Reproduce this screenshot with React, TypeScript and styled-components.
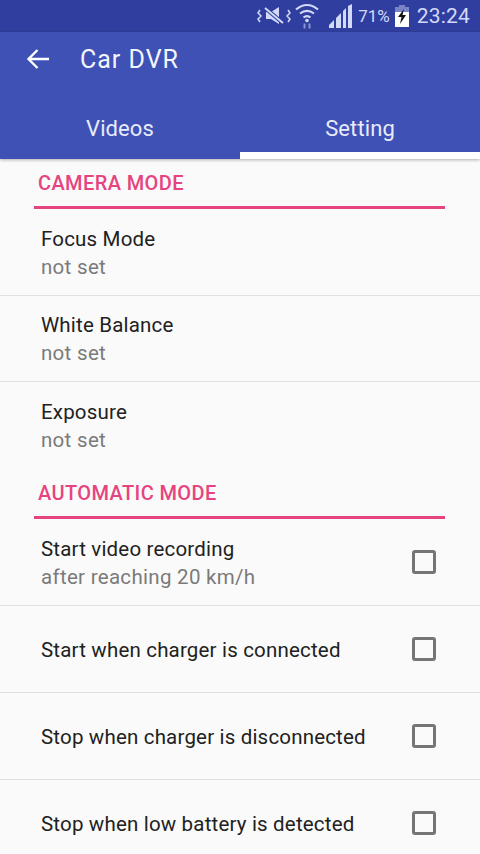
import React from 'react';
import styled, { createGlobalStyle } from 'styled-components';

const GlobalStyle = createGlobalStyle`
  html, body {
    margin: 0;
    padding: 0;
    background: #fafafa;
    font-family: Roboto, "Noto Sans", sans-serif;
  }
`;

const Screen = styled.div`
  width: 480px;
  height: 854px;
  overflow: hidden;
  display: flex;
  flex-direction: column;
  background: #fafafa;
`;

const StatusBar = styled.div`
  height: 32px;
  flex: none;
  background: #303f9f;
  color: #d3daf8;
  display: flex;
  align-items: center;
  justify-content: flex-end;
  padding-right: 10px;
`;

const Percent = styled.span`
  font-size: 17px;
  margin: 0 5px 0 6px;
`;

const Clock = styled.span`
  font-size: 21px;
  letter-spacing: 0.2px;
  margin-left: 8px;
`;

const StatusIcon = styled.svg<{ $gap?: number }>`
  display: block;
  flex: none;
  margin-left: ${({ $gap }) => $gap ?? 0}px;
`;

const AppBar = styled.header`
  flex: none;
  height: 127px;
  background: #3f51b5;
  color: #fff;
  display: flex;
  flex-direction: column;
  box-shadow: 0 1px 3px rgba(0, 0, 0, 0.3);
`;

const TitleRow = styled.div`
  height: 54px;
  display: flex;
  align-items: center;
  padding-left: 26px;
  gap: 30px;
`;

const Title = styled.h1`
  margin: 0;
  font-size: 25px;
  font-weight: 400;
  letter-spacing: 1px;
  color: #f3f5fd;
`;

const Tabs = styled.div`
  margin-top: auto;
  display: grid;
  grid-template-columns: 1fr 1fr;
`;

const Tab = styled.div<{ $active?: boolean }>`
  height: 73px;
  box-sizing: border-box;
  display: flex;
  align-items: center;
  justify-content: center;
  padding-top: 19px;
  font-size: 22px;
  letter-spacing: 0.1px;
  color: #e8ebfa;
  border-bottom: 7px solid ${({ $active }) => ($active ? '#fff' : 'transparent')};
`;

const Content = styled.main`
  flex: 1;
  display: flex;
  flex-direction: column;
`;

const SectionHeader = styled.div`
  margin: 0 35px 0 34px;
  height: 50px;
  flex: none;
  box-sizing: border-box;
  border-bottom: 3px solid #e6447f;
  padding: 11px 0 0 4px;
  color: #e6447f;
  font-size: 20px;
  font-weight: 500;
  letter-spacing: 0.4px;
  line-height: 26px;
`;

const Row = styled.div<{ $compact?: boolean; $last?: boolean }>`
  height: ${({ $compact }) => ($compact ? '86.67px' : '87px')};
  flex: none;
  box-sizing: border-box;
  border-bottom: 1px solid ${({ $last }) => ($last ? 'transparent' : '#e0e0e0')};
  display: flex;
  align-items: center;
  justify-content: space-between;
  padding: 0 44px 0 41px;
`;

const RowText = styled.div`
  display: flex;
  flex-direction: column;
  gap: 3px;
  padding-top: 2px;
`;

const RowTitle = styled.div`
  font-size: 20.5px;
  line-height: 26px;
  letter-spacing: 0.18px;
  color: #212121;
`;

const RowSubtitle = styled.div`
  font-size: 20.5px;
  line-height: 25px;
  letter-spacing: 0.3px;
  color: #7a7a7a;
`;

const Checkbox = styled.div`
  width: 24px;
  height: 24px;
  box-sizing: border-box;
  border: 3px solid #757575;
  border-radius: 3px;
`;

const cameraRows = ['Focus Mode', 'White Balance', 'Exposure'];

const autoRows = [
  { title: 'Start video recording', subtitle: 'after reaching 20 km/h' },
  { title: 'Start when charger is connected' },
  { title: 'Stop when charger is disconnected' },
  { title: 'Stop when low battery is detected' },
];

export default function App(): JSX.Element {
  return (
    <Screen>
      <GlobalStyle />
      <StatusBar>
        <StatusIcon width="34" height="20" viewBox="0 0 34 20" fill="none" stroke="currentColor" strokeWidth="1.500">
          <path d="M9 6h5l8-5v17l-8-5H9z" fill="currentColor" stroke="none" />
          <path d="M7 1l20 17" stroke="#303f9f" strokeWidth="4" />
          <path d="M8 2l18 15" strokeWidth="2" />
          <path d="M3 4L1 7l3 3-3 3 2 3M31 4l2 3-3 3 3 3-2 3" />
        </StatusIcon>
        <StatusIcon $gap={4} width="24" height="26" viewBox="0 0 24 26" fill="none" stroke="currentColor" strokeWidth="2.200">
          <path d="M1 6.500c7-6 15-6 22 0M5 10.500c4.500-3.500 9.500-3.500 14 0M8.500 14.500c2.500-2 4.500-2 7 0" />
          <circle cx="12" cy="17.500" r="1.800" fill="currentColor" stroke="none" />
          <path d="M9.500 20.500v5M14.500 20.500v5" strokeWidth="2" opacity="0.55" />
        </StatusIcon>
        <StatusIcon $gap={10} width="23" height="24" viewBox="0 0 23 24" fill="currentColor">
          <path d="M0 24v-3l5-5v8zM7 24V14l5-5v15zM14 24V7l3-3v20zM19 24V2l4-2v24z" />
        </StatusIcon>
        <Percent>71%</Percent>
        <StatusIcon width="14" height="22" viewBox="0 0 14 22" fill="currentColor">
          <path d="M4 0h6v2h4v6H0V2h4z" opacity="0.45" />
          <path d="M0 7h14v15H0z" fill="#fff" />
          <path d="M9 4L3 12h3.500L5 19l6-9H7.500z" fill="#111" />
        </StatusIcon>
        <Clock>23:24</Clock>
      </StatusBar>
      <AppBar>
        <TitleRow>
          <svg width="24" height="24" viewBox="0 0 24 24" fill="none" stroke="#fff" strokeWidth="2.400">
            <path d="M23 12H2M11.500 3L2.500 12l9 9" />
          </svg>
          <Title>Car DVR</Title>
        </TitleRow>
        <Tabs>
          <Tab>Videos</Tab>
          <Tab $active>Setting</Tab>
        </Tabs>
      </AppBar>
      <Content>
        <SectionHeader>CAMERA MODE</SectionHeader>
        {cameraRows.map((title, i) => (
          <Row key={title} $compact $last={i === cameraRows.length - 1}>
            <RowText>
              <RowTitle>{title}</RowTitle>
              <RowSubtitle>not set</RowSubtitle>
            </RowText>
          </Row>
        ))}
        <SectionHeader>AUTOMATIC MODE</SectionHeader>
        {autoRows.map((row, i) => (
          <Row key={row.title} $last={i === autoRows.length - 1}>
            <RowText>
              <RowTitle>{row.title}</RowTitle>
              {row.subtitle && <RowSubtitle>{row.subtitle}</RowSubtitle>}
            </RowText>
            <Checkbox />
          </Row>
        ))}
      </Content>
    </Screen>
  );
}
